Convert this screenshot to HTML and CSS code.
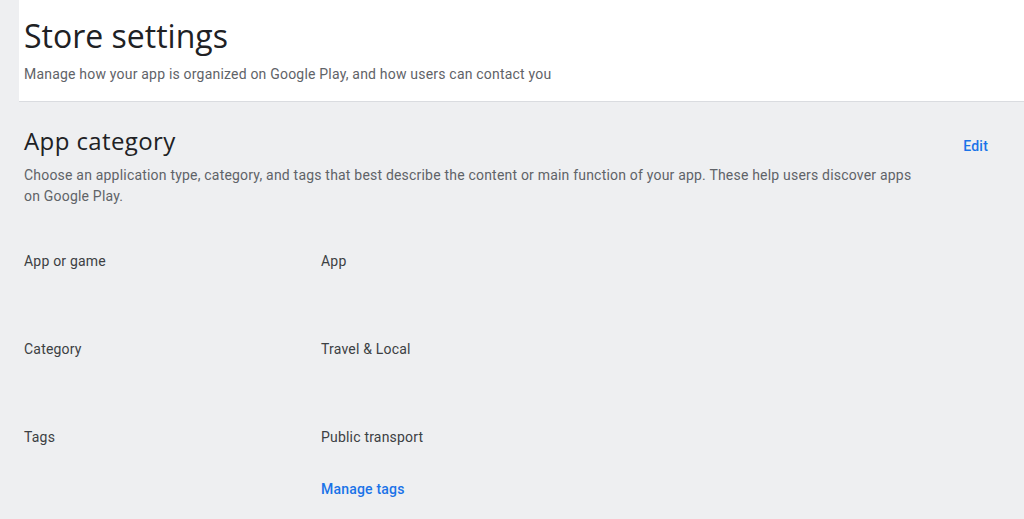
FILE: index.html
```html
<!DOCTYPE html>
<html lang="en">
<head>
<meta charset="utf-8">
<title>Store settings</title>
<link rel="stylesheet" href="styles.css">
</head>
<body>
<div class="page">
  <header class="header">
    <h1 class="title">Store settings</h1>
    <p class="subtitle">Manage how your app is organized on Google Play, and how users can contact you</p>
  </header>
  <section class="section">
    <div class="section-head">
      <div class="section-text">
        <h2 class="section-title">App category</h2>
        <p class="section-desc">Choose an application type, category, and tags that best describe the content or main function of your app. These help users discover apps on Google Play.</p>
      </div>
      <a class="edit" href="#">Edit</a>
    </div>
    <div class="rows">
      <div class="row">
        <div class="label">App or game</div>
        <div class="value">App</div>
      </div>
      <div class="row">
        <div class="label">Category</div>
        <div class="value">Travel &amp; Local</div>
      </div>
      <div class="row">
        <div class="label">Tags</div>
        <div class="value">
          <div>Public transport</div>
          <a class="link" href="#">Manage tags</a>
        </div>
      </div>
    </div>
  </section>
</div>
</body>
</html>
```
FILE: styles.css
```css
* { box-sizing: border-box; }
html, body { margin: 0; padding: 0; }
body {
  background: #eeeff1;
  font-family: Roboto, "Liberation Sans", sans-serif;
  color: #3c4043;
  letter-spacing: 0.2px;
  overflow: hidden;
}
.page {
  padding-left: 19px;
}
.header {
  background: #ffffff;
  border-bottom: 1px solid #dadce0;
  padding: 16px 0 17px 5px;
}
.title {
  margin: 0;
  font-family: "Open Sans", Roboto, sans-serif;
  font-weight: 400;
  font-size: 32px;
  line-height: 40px;
  color: #202124;
  letter-spacing: 0;
}
.subtitle {
  margin: 8px 0 0;
  font-size: 14px;
  line-height: 20px;
  color: #5f6368;
}
.section {
  padding: 23px 36px 0 5px;
}
.section-head {
  display: flex;
  justify-content: space-between;
  align-items: flex-start;
}
.section-text {
  max-width: 900px;
}
.section-title {
  margin: 0;
  font-family: "Open Sans", Roboto, sans-serif;
  font-weight: 400;
  font-size: 24px;
  line-height: 32px;
  color: #202124;
  letter-spacing: 0.4px;
}
.section-desc {
  margin: 7.5px 0 0;
  font-size: 14px;
  line-height: 21px;
  color: #5f6368;
}
.edit {
  margin-top: 11px;
  font-size: 14px;
  line-height: 20px;
  font-weight: 500;
  color: #1a73e8;
  text-decoration: none;
}
.rows {
  margin-top: 20px;
}
.row {
  display: grid;
  grid-template-columns: 297px 1fr;
  padding: 24px 0 44px;
  font-size: 14px;
  line-height: 20px;
  color: #3c4043;
}
.link {
  display: block;
  margin-top: 32px;
  font-weight: 500;
  color: #1a73e8;
  text-decoration: none;
}
```
